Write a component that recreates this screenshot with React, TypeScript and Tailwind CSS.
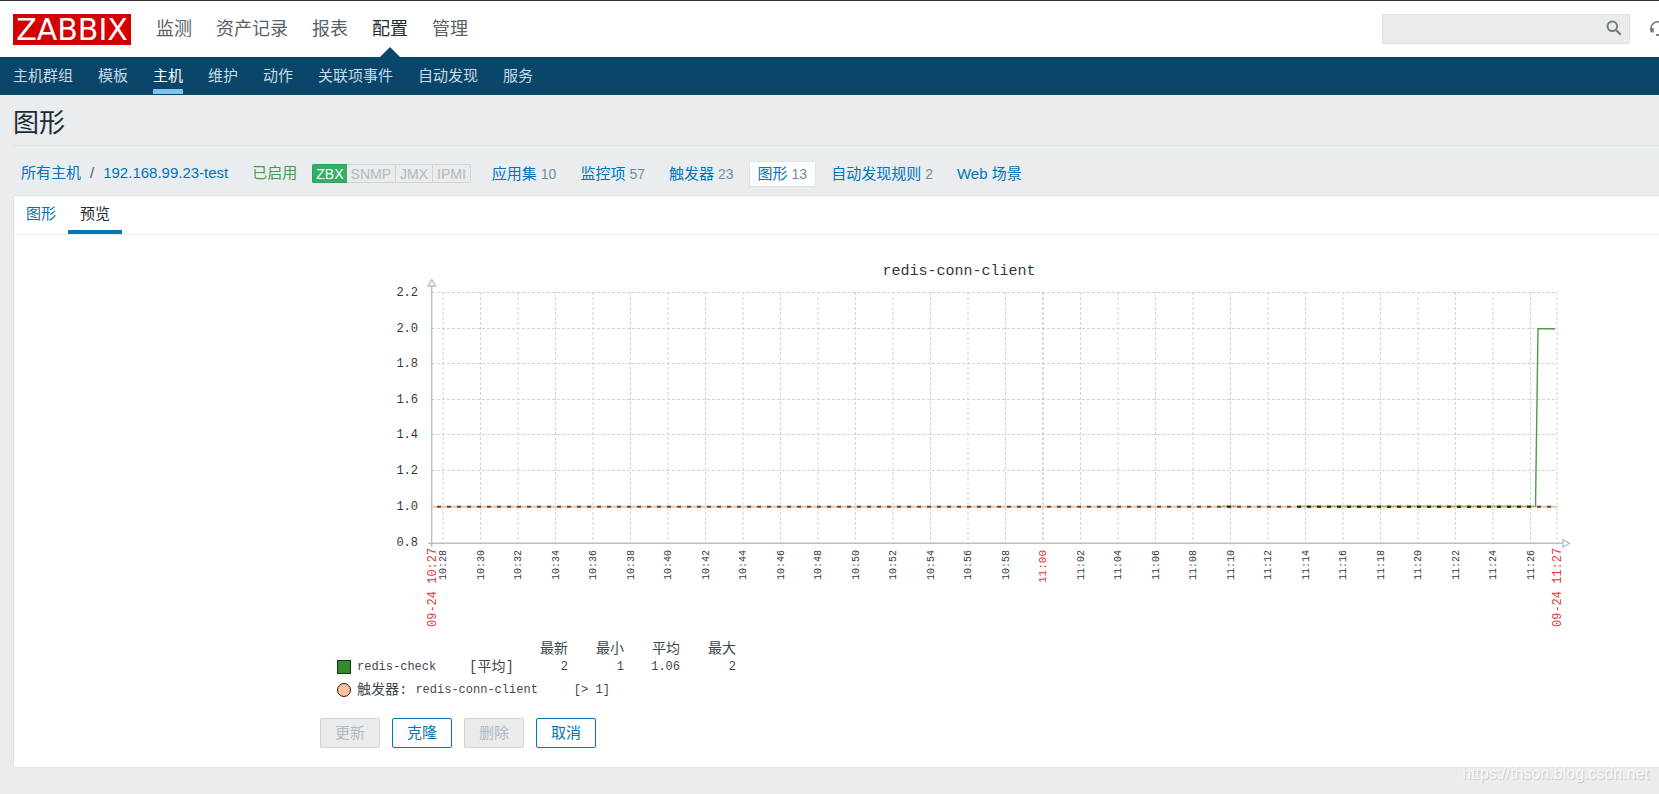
import React from "react";
import clsx from "clsx";

interface LinkItem {
  label: string;
  count?: number;
  active?: boolean;
}

const mainMenu: LinkItem[] = [
  { label: "监测" },
  { label: "资产记录" },
  { label: "报表" },
  { label: "配置", active: true },
  { label: "管理" },
];

const subMenu: LinkItem[] = [
  { label: "主机群组" },
  { label: "模板" },
  { label: "主机", active: true },
  { label: "维护" },
  { label: "动作" },
  { label: "关联项事件" },
  { label: "自动发现" },
  { label: "服务" },
];

const hostLinks: LinkItem[] = [
  { label: "应用集", count: 10 },
  { label: "监控项", count: 57 },
  { label: "触发器", count: 23 },
  { label: "图形", count: 13, active: true },
  { label: "自动发现规则", count: 2 },
  { label: "Web 场景" },
];

const interfaces = ["SNMP", "JMX", "IPMI"];

const yTicks = [
  { label: "2.2", y: 57.5 },
  { label: "2.0", y: 93.5 },
  { label: "1.8", y: 128.5 },
  { label: "1.6", y: 164.5 },
  { label: "1.4", y: 199.5 },
  { label: "1.2", y: 235.5 },
  { label: "1.0", y: 271.5 },
];

// one tick every two minutes, 10:28 to 11:26
const xTicks = Array.from({ length: 30 }, (_, i) => {
  const minutes = 10 * 60 + 28 + i * 2;
  const hour = Math.floor(minutes / 60);
  const label = `${hour}:${String(minutes % 60).padStart(2, "0")}`;
  return { label, x: 123 + i * 37.5, major: minutes % 60 === 0 };
});

const Header = () => (
  <header className="flex h-[57px] items-start overflow-hidden border-t border-[#2f3037] bg-white pl-[13px]">
    <a
      href="#"
      className="mt-[13px] flex h-[31px] w-[118px] shrink-0 items-center justify-center bg-[#d40000] font-['DejaVu_Sans'] text-[30px] leading-[31px] text-white"
    >
      ZABBIX
    </a>
    <nav className="ml-[25px] flex h-14 shrink-0 gap-6 text-lg leading-14">
      {mainMenu.map((item) => (
        <a
          key={item.label}
          href="#"
          className={clsx(
            "relative",
            item.active ? "text-[#1f2c33]" : "text-[#566168]",
          )}
        >
          {item.label}
          {item.active && (
            <span className="absolute bottom-0 left-1/2 -ml-2.5 border-x-10 border-b-10 border-x-transparent border-b-[#0a466a]" />
          )}
        </a>
      ))}
    </nav>
    <form className="relative mt-[13px] ml-auto h-[30px] w-[248px] shrink-0">
      <input
        type="search"
        aria-label="搜索"
        className="h-full w-full border border-[#e3e3e3] bg-[#ebebeb] px-2 outline-none"
      />
      <button
        type="button"
        aria-label="搜索"
        className="absolute top-1.5 right-2 h-4 w-4 text-[#6b7f89]"
      >
        <svg viewBox="0 0 16 16" className="h-4 w-4" fill="none">
          <circle cx="6.3" cy="6.3" r="4.8" stroke="currentColor" strokeWidth="2" />
          <path d="M10 10l4.7 4.7" stroke="currentColor" strokeWidth="2.2" />
        </svg>
      </button>
    </form>
    {/* the support link runs past the right edge */}
    <a href="#" aria-label="支持" className="mt-5 -mr-[7px] ml-5 shrink-0 text-[#6b7f89]">
      <svg viewBox="0 0 16 16" className="h-4 w-4" fill="none">
        <path
          d="M1 10V7a7 6.2 0 0 1 14 0v3"
          stroke="currentColor"
          strokeWidth="1.6"
        />
        <path d="M.2 7h3.6v4.4H1.8A1.6 1.6 0 0 1 .2 9.8zM12.2 7h3.6v2.8a1.6 1.6 0 0 1-1.6 1.6h-2z" fill="currentColor" />
        <path d="M6.2 14h3c3 0 5-1 5-3" stroke="currentColor" strokeWidth="1.8" />
      </svg>
    </a>
  </header>
);

const SubNav = () => (
  <nav className="flex h-[38px] gap-[25px] bg-[#0a466a] pl-[13px] text-[15px] leading-[37px]">
    {subMenu.map((item) => (
      <a
        key={item.label}
        href="#"
        className={clsx(
          "h-[37px] shrink-0",
          item.active
            ? "border-b-5 border-[#7ec3f0] text-white"
            : "text-[#c8dbe6]",
        )}
      >
        {item.label}
      </a>
    ))}
  </nav>
);

const HostBar = () => (
  <div className="flex h-[49px] items-center pt-1.5 pl-2 text-[15px] whitespace-nowrap text-[#0275b8]">
    <a href="#">所有主机</a>
    <span className="mx-[9px] text-[#4f5d65]">/</span>
    <a href="#">192.168.99.23-test</a>
    <span className="ml-6 text-[#429e47]">已启用</span>
    <div className="ml-[15px] flex h-[19px] text-sm leading-[18px]">
      <span className="rounded-l-xs border-y border-l border-[#2f9f5e] bg-[#34af67] px-[3px] text-white">
        ZBX
      </span>
      {interfaces.map((name) => (
        <span
          key={name}
          className="border-y border-r border-[#ccd5d9] bg-[#ebebeb] px-1 text-[#acbbc2] last:rounded-r-xs"
        >
          {name}
        </span>
      ))}
    </div>
    <div className="ml-3 flex gap-1.5">
      {hostLinks.map((item) => (
        <a
          key={item.label}
          href="#"
          className={clsx(
            "h-[26px] rounded-xs border px-2 leading-6",
            item.active ? "border-[#dfe4e7] bg-white" : "border-transparent",
          )}
        >
          {item.label}
          {item.count !== undefined && (
            <span className="ml-1 text-sm text-[#768d99]">{item.count}</span>
          )}
        </a>
      ))}
    </div>
  </div>
);

const Chart = () => (
  <svg
    width="1260"
    height="400"
    viewBox="0 0 1260 400"
    className="block font-['Liberation_Mono',monospace]"
    fill="none"
  >
    <text x="639" y="40" textAnchor="middle" fontSize="15" fill="#2f3a40">
      redis-conn-client
    </text>

    {yTicks.map((tick) => (
      <line
        key={tick.label}
        x1="112"
        x2="1237"
        y1={tick.y}
        y2={tick.y}
        stroke="#ccd5d9"
        strokeDasharray="3 2"
      />
    ))}
    {xTicks.map((tick) => (
      <line
        key={tick.label}
        x1={tick.x}
        x2={tick.x}
        y1="57"
        y2="308"
        stroke={tick.major ? "#acbbc2" : "#ccd5d9"}
        strokeDasharray="3 2"
      />
    ))}
    <line x1="1237" x2="1237" y1="57" y2="308" stroke="#ccd5d9" strokeDasharray="3 2" />

    {[...yTicks, { label: "0.8", y: 307.5 }].map((tick) => (
      <text
        key={tick.label}
        x="98"
        y={tick.y + 3.5}
        textAnchor="end"
        fontSize="12"
        fill="#2f3a40"
      >
        {tick.label}
      </text>
    ))}

    <g stroke="#b4c1c7" strokeWidth="1.4">
      <path d="M111.7 51V312" />
      <path d="M108 308.3H1243" />
      <path d="M108 51h7.5l-3.8-6.4z" fill="#fff" />
      <path d="M1243 304.6v7.5l6.6-3.8z" fill="#fff" />
    </g>

    {/* trigger threshold and the item value lying on it */}
    <path d="M112 271.7H1237" stroke="#ffc096" strokeWidth="2" />
    <path d="M902 271.2H916M977 271.2H1215" stroke="#a8922f" />
    <path d="M117 271.7H1237" stroke="#4a5358" strokeWidth="2" strokeDasharray="4 6" />
    <path
      d="M907 271.7H911M977 271.7H1215"
      stroke="#12401c"
      strokeWidth="2"
      strokeDasharray="4 6"
    />
    <path d="M1215.5 271.5L1218 93.8H1235" stroke="#4c9c47" strokeWidth="1.4" />

    {xTicks.map((tick) => (
      <text
        key={tick.label}
        transform={`translate(${tick.x + 3} ${tick.major ? 348 : 345}) rotate(-90)`}
        fontSize={tick.major ? 11 : 10}
        fill={tick.major ? "#e33734" : "#2f3a40"}
      >
        {tick.label}
      </text>
    ))}
    <text transform="translate(116 392) rotate(-90)" fontSize="12" fill="#e33734">
      09-24 10:27
    </text>
    <text transform="translate(1241 392) rotate(-90)" fontSize="12" fill="#e33734">
      09-24 11:27
    </text>
  </svg>
);

const Legend = () => (
  <div className="mt-[5px] ml-[17px] font-['Liberation_Mono','Noto_Sans_CJK_SC',monospace] text-xs text-[#3d484e]">
    <table className="w-[399px] table-fixed text-right leading-4">
      <colgroup>
        <col className="w-[132px]" />
        <col className="w-[43px]" />
        <col className="w-14" />
        <col className="w-14" />
        <col className="w-14" />
        <col className="w-14" />
      </colgroup>
      <thead>
        <tr className="h-[18px] text-sm leading-4">
          <td />
          <td />
          <th className="font-normal">最新</th>
          <th className="font-normal">最小</th>
          <th className="font-normal">平均</th>
          <th className="font-normal">最大</th>
        </tr>
      </thead>
      <tbody>
        <tr className="h-[18px]">
          <td>
            <span className="flex items-center">
              <span className="mr-1.5 h-3.5 w-3.5 border border-[#14380f] bg-[#36892c]" />
              redis-check
            </span>
          </td>
          <td className="text-left text-sm leading-4 whitespace-nowrap">[平均]</td>
          <td>2</td>
          <td>1</td>
          <td>1.06</td>
          <td>2</td>
        </tr>
      </tbody>
    </table>
    <div className="mt-1 flex h-5 items-center">
      <span className="mr-1.5 h-3.5 w-3.5 rounded-full border border-[#222] bg-[#ffc096]" />
      <span className="text-sm">触发器:</span>
      <span className="ml-2">redis-conn-client</span>
      <span className="ml-9">[&gt; 1]</span>
    </div>
  </div>
);

const FormButton = ({ label, disabled }: { label: string; disabled?: boolean }) => (
  <button
    type="button"
    disabled={disabled}
    className={clsx(
      "h-[30px] w-15 rounded-xs border text-[15px] leading-7",
      disabled
        ? "border-[#ccd5d9] bg-[#ebebeb] text-[#acbbc2]"
        : "border-[#0275b8] bg-white text-[#0275b8]",
    )}
  >
    {label}
  </button>
);

const App: React.FC = () => {
  return (
    <div className="relative min-h-screen overflow-x-hidden bg-[#e9edf0] font-['Liberation_Sans','Noto_Sans_CJK_SC',sans-serif] text-[#1f2c33]">
      <Header />
      <SubNav />
      <main className="ml-[13px]">
        <h1 className="h-[51px] border-b border-[#dfe4e7] text-[26px] leading-[56px]">
          图形
        </h1>
        <HostBar />

        <section className="border-y border-l border-[#dfe4e7] bg-white">
          <div className="flex h-[39px] border-b border-[#ebeef0] text-[15px] leading-[36px]">
            <a href="#" className="px-3 text-[#0275b8]">
              图形
            </a>
            <a href="#" className="h-[38px] border-b-4 border-[#0275b8] px-3">
              预览
            </a>
          </div>
          <div className="pb-[19px] pl-[306px]">
            <Chart />
            <Legend />
            <div className="mt-[18px] flex gap-3">
              <FormButton label="更新" disabled />
              <FormButton label="克隆" />
              <FormButton label="删除" disabled />
              <FormButton label="取消" />
            </div>
          </div>
        </section>
      </main>
      <span className="absolute right-2.5 bottom-2 text-base leading-6 text-[#f8f9fa] [text-shadow:1px_1px_1px_#c3c7ca]">
        https://thson.blog.csdn.net
      </span>
    </div>
  );
};

export default App;
